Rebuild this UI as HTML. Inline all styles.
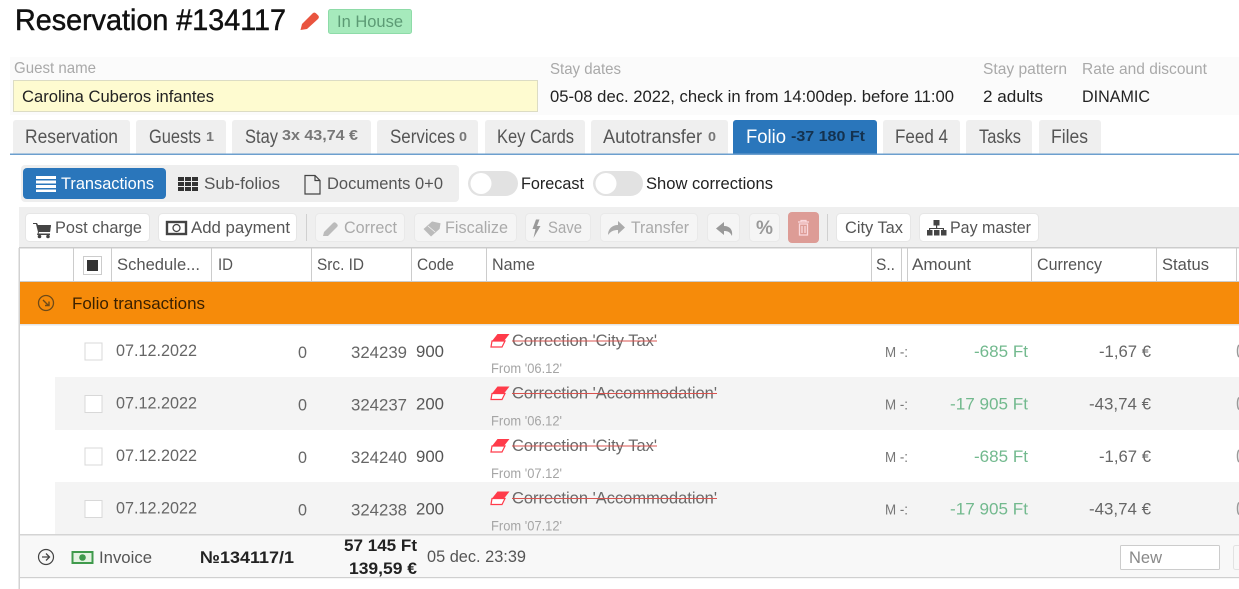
<!DOCTYPE html>
<html lang="en"><head><meta charset="utf-8"><title>Reservation #134117</title>
<style>
html,body{margin:0;padding:0;background:#fff;width:1239px;height:589px;overflow:hidden}
svg{display:block}
text{font-family:"Liberation Sans",sans-serif;font-size:17px;fill:#4a4a4a}
.l{fill:#a9a9a9;font-size:16px}
.d{fill:#222}
.s{font-size:13px;font-weight:bold;fill:#777}
.o{fill:#aaa}
.t{fill:#555}
.g{fill:#72b98e}
.r{fill:#666}
.f{font-size:14px;fill:#a5a5a5}
.b{font-weight:bold;fill:#222}
.st{fill:#6a6a6a}
.m{font-size:15px;fill:#777}
</style></head><body>
<svg width="1239" height="589" viewBox="0 0 1239 589" xmlns="http://www.w3.org/2000/svg">
<!-- title -->
<text x="15" y="30" style="font-size:30px;fill:#111;stroke:#111;stroke-width:.5" textLength="271" lengthAdjust="spacingAndGlyphs">Reservation #134117</text>
<path d="M300.500 30l1.500-6 10.500-10.500c1.200-1.200 2.500-1.200 3.700 0l1.800 1.800c1.200 1.200 1.200 2.500 0 3.700L307 29z" fill="#e9543f"/>
<rect x="328.500" y="9.500" width="83" height="24" rx="2" fill="#a6eabc" stroke="#8edba8"/>
<text x="337" y="27" style="fill:#5c9a74" textLength="66" lengthAdjust="spacingAndGlyphs">In House</text>
<!-- info panel -->
<rect x="10" y="57" width="1229" height="58" fill="#fbfbfb"/>
<text class="l" x="14" y="73" textLength="82" lengthAdjust="spacingAndGlyphs">Guest name</text>
<rect x="13.500" y="80.500" width="524" height="31" fill="#fefbd0" stroke="#dcdcc4"/>
<text class="d" x="22" y="102" textLength="192" lengthAdjust="spacingAndGlyphs">Carolina Cuberos infantes</text>
<text class="l" x="550" y="74" textLength="71" lengthAdjust="spacingAndGlyphs">Stay dates</text>
<text class="d" x="550" y="102" textLength="404" lengthAdjust="spacingAndGlyphs">05-08 dec. 2022, check in from 14:00dep. before 11:00</text>
<text class="l" x="983" y="74" textLength="84" lengthAdjust="spacingAndGlyphs">Stay pattern</text>
<text class="d" x="983" y="102" textLength="60" lengthAdjust="spacingAndGlyphs">2 adults</text>
<text class="l" x="1082" y="74" textLength="125" lengthAdjust="spacingAndGlyphs">Rate and discount</text>
<text class="d" x="1082" y="102" textLength="68" lengthAdjust="spacingAndGlyphs">DINAMIC</text>
<!-- tabs -->
<g fill="#efefef">
<path d="M13 154v-31a3 3 0 0 1 3-3h111a3 3 0 0 1 3 3v31z"/>
<path d="M136 154v-31a3 3 0 0 1 3-3h84a3 3 0 0 1 3 3v31z"/>
<path d="M232 154v-31a3 3 0 0 1 3-3h133a3 3 0 0 1 3 3v31z"/>
<path d="M377 154v-31a3 3 0 0 1 3-3h95a3 3 0 0 1 3 3v31z"/>
<path d="M485 154v-31a3 3 0 0 1 3-3h94a3 3 0 0 1 3 3v31z"/>
<path d="M591 154v-31a3 3 0 0 1 3-3h131a3 3 0 0 1 3 3v31z"/>
<path d="M883 154v-31a3 3 0 0 1 3-3h71a3 3 0 0 1 3 3v31z"/>
<path d="M966 154v-31a3 3 0 0 1 3-3h60a3 3 0 0 1 3 3v31z"/>
<path d="M1039 154v-31a3 3 0 0 1 3-3h56a3 3 0 0 1 3 3v31z"/>
</g>
<path d="M733 154v-31a3 3 0 0 1 3-3h138a3 3 0 0 1 3 3v31z" fill="#2a76bb"/>
<rect x="10" y="153.500" width="1229" height="1.500" fill="#6c9fce"/>
<g>
<text class="t" x="25" y="143" textLength="93" lengthAdjust="spacingAndGlyphs" style="font-size:19px">Reservation</text>
<text class="t" x="149" y="143" textLength="52" lengthAdjust="spacingAndGlyphs" style="font-size:19px">Guests</text>
<text class="s" x="206" y="141" textLength="8" lengthAdjust="spacingAndGlyphs">1</text>
<text class="t" x="245" y="143" textLength="33" lengthAdjust="spacingAndGlyphs" style="font-size:19px">Stay</text>
<text class="s" x="282" y="140" textLength="76" lengthAdjust="spacingAndGlyphs" style="font-size:15px">3x 43,74 €</text>
<text class="t" x="390" y="143" textLength="65" lengthAdjust="spacingAndGlyphs" style="font-size:19px">Services</text>
<text class="s" x="459" y="141" textLength="8" lengthAdjust="spacingAndGlyphs">0</text>
<text class="t" x="497" y="143" textLength="77" lengthAdjust="spacingAndGlyphs" style="font-size:19px">Key Cards</text>
<text class="t" x="603" y="143" textLength="99" lengthAdjust="spacingAndGlyphs" style="font-size:19px">Autotransfer</text>
<text class="s" x="708" y="141" textLength="8" lengthAdjust="spacingAndGlyphs">0</text>
<text x="746" y="143" textLength="40" lengthAdjust="spacingAndGlyphs" style="font-size:19px;fill:#fff">Folio</text>
<text x="791" y="141" textLength="74" lengthAdjust="spacingAndGlyphs" style="font-size:15px;font-weight:bold;fill:#14324f">-37 180 Ft</text>
<text class="t" x="895" y="143" textLength="53" lengthAdjust="spacingAndGlyphs" style="font-size:19px">Feed 4</text>
<text class="t" x="979" y="143" textLength="42" lengthAdjust="spacingAndGlyphs" style="font-size:19px">Tasks</text>
<text class="t" x="1051" y="143" textLength="37" lengthAdjust="spacingAndGlyphs" style="font-size:19px">Files</text>
</g>
<!-- segmented -->
<rect x="21" y="165" width="438" height="37" rx="4" fill="#eee"/>
<rect x="23" y="168" width="143" height="31" rx="4" fill="#2a76bb"/>
<g fill="#fff"><rect x="36" y="176" width="20" height="3"/><rect x="36" y="180.500" width="20" height="3"/><rect x="36" y="185" width="20" height="3"/><rect x="36" y="189.500" width="20" height="2.500"/></g>
<text x="61" y="189" textLength="93" lengthAdjust="spacingAndGlyphs" style="fill:#fff">Transactions</text>
<g fill="#333"><rect x="178" y="177" width="6" height="4"/><rect x="185" y="177" width="6" height="4"/><rect x="192" y="177" width="6" height="4"/><rect x="178" y="182" width="6" height="4"/><rect x="185" y="182" width="6" height="4"/><rect x="192" y="182" width="6" height="4"/><rect x="178" y="187" width="6" height="4"/><rect x="185" y="187" width="6" height="4"/><rect x="192" y="187" width="6" height="4"/></g>
<text class="t" x="204" y="189" textLength="76" lengthAdjust="spacingAndGlyphs">Sub-folios</text>
<path d="M305 175.500h10l5 5v13.500h-15zM315 175.500v5h5" fill="none" stroke="#444" stroke-width="1.200"/>
<text class="t" x="327" y="189" textLength="116" lengthAdjust="spacingAndGlyphs">Documents 0+0</text>
<!-- toggles -->
<rect x="468" y="171" width="50" height="25" rx="12.500" fill="#e2e2e2"/><circle cx="481" cy="183.500" r="10.500" fill="#fff"/>
<text class="d" x="521" y="189" textLength="63" lengthAdjust="spacingAndGlyphs">Forecast</text>
<rect x="593" y="171" width="50" height="25" rx="12.500" fill="#e2e2e2"/><circle cx="606" cy="183.500" r="10.500" fill="#fff"/>
<text class="d" x="646" y="189" textLength="127" lengthAdjust="spacingAndGlyphs">Show corrections</text>
<!-- toolbar -->
<rect x="19" y="207" width="1220" height="41" fill="#efefef"/>
<g fill="#fff" stroke="#e6e6e6">
<rect x="25.500" y="213.500" width="124" height="28" rx="4"/>
<rect x="158.500" y="213.500" width="138" height="28" rx="4"/>
<rect x="836.500" y="213.500" width="74" height="28" rx="4"/>
<rect x="919.500" y="213.500" width="119" height="28" rx="4"/>
</g>
<g fill="#f5f5f5" stroke="#e9e9e9">
<rect x="315.500" y="213.500" width="89" height="28" rx="4"/>
<rect x="414.500" y="213.500" width="102" height="28" rx="4"/>
<rect x="525.500" y="213.500" width="65" height="28" rx="4"/>
<rect x="600.500" y="213.500" width="97" height="28" rx="4"/>
<rect x="707.500" y="213.500" width="32" height="28" rx="4"/>
<rect x="749.500" y="213.500" width="30" height="28" rx="4"/>
</g>
<rect x="788" y="212" width="31" height="31" rx="4" fill="#dd9c96"/>
<rect x="306" y="214" width="1" height="27" fill="#d0d0d0"/>
<rect x="827" y="214" width="1" height="27" fill="#d0d0d0"/>
<!-- cart -->
<path d="M33 223h4l1 2h13l-1 7H39l-.5 1.500H50v1.500H37l1-3-2-8h-3z" fill="#444"/><path d="M37.500 225h13.500l-1 7H39z" fill="#444"/><circle cx="39.500" cy="236.500" r="1.800" fill="#444"/><circle cx="48" cy="236.500" r="1.800" fill="#444"/>
<text class="t" x="55" y="233" textLength="87" lengthAdjust="spacingAndGlyphs">Post charge</text>
<!-- money -->
<rect x="167" y="222" width="19" height="12" fill="none" stroke="#444" stroke-width="2.400"/><circle cx="176.500" cy="228" r="3.500" fill="none" stroke="#444" stroke-width="1.300"/>
<text class="t" x="191" y="233" textLength="99" lengthAdjust="spacingAndGlyphs">Add payment</text>
<!-- correct -->
<path d="M323 236l1-4 9-9c1-1 2-1 3 0l1 1c1 1 1 2 0 3l-9 9z" fill="#bbb"/>
<text class="o" x="344" y="233" textLength="53" lengthAdjust="spacingAndGlyphs">Correct</text>
<!-- fiscalize -->
<path d="M423 229l9-8 9 2-1 6-9 8zM428 226l7 6" fill="#bbb" stroke="#f5f5f5" stroke-width=".8"/>
<text class="o" x="445" y="233" textLength="63" lengthAdjust="spacingAndGlyphs">Fiscalize</text>
<!-- bolt -->
<path d="M536 219.500l-3.500 9.500h3l-2 9 7-12h-3.500l2.500-6.500z" fill="#999"/>
<text class="o" x="548" y="233" textLength="34" lengthAdjust="spacingAndGlyphs">Save</text>
<!-- share -->
<path d="M608 235c0-6 4-10 10-10v-4l7 6.500-7 6.500v-4c-4 0-7 1-10 5z" fill="#aaa"/>
<text class="o" x="631" y="233" textLength="58" lengthAdjust="spacingAndGlyphs">Transfer</text>
<!-- undo -->
<path d="M732 236c1-6-2-10-8-10v-4l-8 6.500 8 6.500v-4c4 0 6 1 8 5z" fill="#999"/>
<text x="756" y="234" textLength="17" lengthAdjust="spacingAndGlyphs" style="fill:#999;font-size:19px;font-weight:bold">%</text>
<!-- trash -->
<path d="M798 222h11M801 222v-1.500h5v1.500M799.500 224h8v11h-8zM802 226v7M805 226v7" fill="none" stroke="#fbd9de" stroke-width="1.300"/>
<text class="t" x="845" y="233" textLength="58" lengthAdjust="spacingAndGlyphs">City Tax</text>
<!-- sitemap -->
<rect x="933.500" y="220" width="6" height="5.500" fill="#444"/><path d="M936 225h1.200v3H944v3h-1.200v-2H930.200v2H929v-3h7z" fill="#444"/><rect x="927" y="230" width="5.500" height="5.500" fill="#444"/><rect x="934" y="230" width="5.500" height="5.500" fill="#444"/><rect x="941" y="230" width="5.500" height="5.500" fill="#444"/>
<text class="t" x="950" y="233" textLength="81" lengthAdjust="spacingAndGlyphs">Pay master</text>
<!-- table header -->
<rect x="19" y="247" width="1220" height="1.500" fill="#ccc"/>
<rect x="19" y="281" width="1220" height="1" fill="#ccc"/>
<rect x="18.500" y="248" width="1.500" height="341" fill="#d2d2d2"/>
<g fill="#ccc">
<rect x="73" y="248" width="1" height="33"/><rect x="111" y="248" width="1" height="33"/><rect x="211" y="248" width="1" height="33"/><rect x="311" y="248" width="1" height="33"/><rect x="411" y="248" width="1" height="33"/><rect x="486" y="248" width="1" height="33"/><rect x="871" y="248" width="1" height="33"/><rect x="901" y="248" width="1" height="33"/><rect x="907" y="248" width="1" height="33"/><rect x="1031" y="248" width="1" height="33"/><rect x="1156" y="248" width="1" height="33"/><rect x="1236" y="248" width="1" height="33"/>
</g>
<rect x="83.500" y="256.500" width="18" height="18" fill="#fff" stroke="#ccc"/><rect x="87" y="260" width="11" height="11" fill="#333"/>
<text class="t" x="117" y="270" textLength="83" lengthAdjust="spacingAndGlyphs">Schedule...</text>
<text class="t" x="218" y="270" textLength="15" lengthAdjust="spacingAndGlyphs">ID</text>
<text class="t" x="317" y="270" textLength="47" lengthAdjust="spacingAndGlyphs">Src. ID</text>
<text class="t" x="417" y="270" textLength="37" lengthAdjust="spacingAndGlyphs">Code</text>
<text class="t" x="492" y="270" textLength="43" lengthAdjust="spacingAndGlyphs">Name</text>
<text class="t" x="876" y="270" textLength="19" lengthAdjust="spacingAndGlyphs">S..</text>
<text class="t" x="912" y="270" textLength="59" lengthAdjust="spacingAndGlyphs">Amount</text>
<text class="t" x="1037" y="270" textLength="65" lengthAdjust="spacingAndGlyphs">Currency</text>
<text class="t" x="1162" y="270" textLength="47" lengthAdjust="spacingAndGlyphs">Status</text>
<!-- orange -->
<rect x="20" y="282" width="1219" height="42" fill="#f68b0a"/>
<circle cx="46" cy="303" r="7.500" fill="none" stroke="#6e4a18" stroke-width="1.300"/>
<path d="M43 300l5.500 5.500M49 301.500v4h-4" fill="none" stroke="#6e4a18" stroke-width="1.400"/>
<text x="72" y="309" textLength="133" lengthAdjust="spacingAndGlyphs" style="fill:#3a2000">Folio transactions</text>
<rect x="20" y="324" width="1219" height="1.500" fill="#e4e4e4"/>
<!-- rows -->
<rect x="55" y="377" width="1184" height="53" fill="#f4f4f4"/>
<rect x="55" y="482" width="1184" height="52" fill="#f4f4f4"/>
<!-- row 1 -->
<g>
<rect x="85" y="343" width="17" height="17" fill="#fff" stroke="#d8d8d8"/>
<text class="r" x="116" y="356" textLength="81" lengthAdjust="spacingAndGlyphs">07.12.2022</text>
<text class="r" x="298" y="358" textLength="9" lengthAdjust="spacingAndGlyphs">0</text>
<text class="r" x="351" y="358" textLength="56" lengthAdjust="spacingAndGlyphs">324239</text>
<text class="t" x="416" y="357" textLength="28" lengthAdjust="spacingAndGlyphs">900</text>
<path d="M497.500 334h12l-5.500 7h-12z" fill="#ff3b4a"/><path d="M492 341l-1 6h11l3-6z" fill="#fff" stroke="#ff3b4a" stroke-width="1.200"/>
<text class="st" x="512" y="346" textLength="145" lengthAdjust="spacingAndGlyphs">Correction 'City Tax'</text>
<rect x="512" y="340.500" width="145" height="1" fill="#d9534f"/>
<text class="f" x="491" y="373" textLength="71" lengthAdjust="spacingAndGlyphs">From '06.12'</text>
<text class="m" x="885" y="357" textLength="23" lengthAdjust="spacingAndGlyphs">M -:</text>
<text class="g" x="974" y="357" textLength="54" lengthAdjust="spacingAndGlyphs">-685 Ft</text>
<text class="r" x="1099" y="357" textLength="52" lengthAdjust="spacingAndGlyphs">-1,67 €</text>
<path d="M1239 345c-2 2-2 10 0 12" fill="none" stroke="#999" stroke-width="1.500"/>
</g>
<!-- row 2 -->
<g transform="translate(0 52.500)">
<rect x="85" y="343" width="17" height="17" fill="#fff" stroke="#d8d8d8"/>
<text class="r" x="116" y="356" textLength="81" lengthAdjust="spacingAndGlyphs">07.12.2022</text>
<text class="r" x="298" y="358" textLength="9" lengthAdjust="spacingAndGlyphs">0</text>
<text class="r" x="351" y="358" textLength="56" lengthAdjust="spacingAndGlyphs">324237</text>
<text class="t" x="416" y="357" textLength="28" lengthAdjust="spacingAndGlyphs">200</text>
<path d="M497.500 334h12l-5.500 7h-12z" fill="#ff3b4a"/><path d="M492 341l-1 6h11l3-6z" fill="#fff" stroke="#ff3b4a" stroke-width="1.200"/>
<text class="st" x="512" y="346" textLength="205" lengthAdjust="spacingAndGlyphs">Correction 'Accommodation'</text>
<rect x="512" y="340.500" width="205" height="1" fill="#d9534f"/>
<text class="f" x="491" y="373" textLength="71" lengthAdjust="spacingAndGlyphs">From '06.12'</text>
<text class="m" x="885" y="357" textLength="23" lengthAdjust="spacingAndGlyphs">M -:</text>
<text class="g" x="950" y="357" textLength="78" lengthAdjust="spacingAndGlyphs">-17 905 Ft</text>
<text class="r" x="1089" y="357" textLength="62" lengthAdjust="spacingAndGlyphs">-43,74 €</text>
<path d="M1239 345c-2 2-2 10 0 12" fill="none" stroke="#999" stroke-width="1.500"/>
</g>
<!-- row 3 -->
<g transform="translate(0 105)">
<rect x="85" y="343" width="17" height="17" fill="#fff" stroke="#d8d8d8"/>
<text class="r" x="116" y="356" textLength="81" lengthAdjust="spacingAndGlyphs">07.12.2022</text>
<text class="r" x="298" y="358" textLength="9" lengthAdjust="spacingAndGlyphs">0</text>
<text class="r" x="351" y="358" textLength="56" lengthAdjust="spacingAndGlyphs">324240</text>
<text class="t" x="416" y="357" textLength="28" lengthAdjust="spacingAndGlyphs">900</text>
<path d="M497.500 334h12l-5.500 7h-12z" fill="#ff3b4a"/><path d="M492 341l-1 6h11l3-6z" fill="#fff" stroke="#ff3b4a" stroke-width="1.200"/>
<text class="st" x="512" y="346" textLength="145" lengthAdjust="spacingAndGlyphs">Correction 'City Tax'</text>
<rect x="512" y="340.500" width="145" height="1" fill="#d9534f"/>
<text class="f" x="491" y="373" textLength="71" lengthAdjust="spacingAndGlyphs">From '07.12'</text>
<text class="m" x="885" y="357" textLength="23" lengthAdjust="spacingAndGlyphs">M -:</text>
<text class="g" x="974" y="357" textLength="54" lengthAdjust="spacingAndGlyphs">-685 Ft</text>
<text class="r" x="1099" y="357" textLength="52" lengthAdjust="spacingAndGlyphs">-1,67 €</text>
<path d="M1239 345c-2 2-2 10 0 12" fill="none" stroke="#999" stroke-width="1.500"/>
</g>
<!-- row 4 -->
<g transform="translate(0 157.500)">
<rect x="85" y="343" width="17" height="17" fill="#fff" stroke="#d8d8d8"/>
<text class="r" x="116" y="356" textLength="81" lengthAdjust="spacingAndGlyphs">07.12.2022</text>
<text class="r" x="298" y="358" textLength="9" lengthAdjust="spacingAndGlyphs">0</text>
<text class="r" x="351" y="358" textLength="56" lengthAdjust="spacingAndGlyphs">324238</text>
<text class="t" x="416" y="357" textLength="28" lengthAdjust="spacingAndGlyphs">200</text>
<path d="M497.500 334h12l-5.500 7h-12z" fill="#ff3b4a"/><path d="M492 341l-1 6h11l3-6z" fill="#fff" stroke="#ff3b4a" stroke-width="1.200"/>
<text class="st" x="512" y="346" textLength="205" lengthAdjust="spacingAndGlyphs">Correction 'Accommodation'</text>
<rect x="512" y="340.500" width="205" height="1" fill="#d9534f"/>
<text class="f" x="491" y="373" textLength="71" lengthAdjust="spacingAndGlyphs">From '07.12'</text>
<text class="m" x="885" y="357" textLength="23" lengthAdjust="spacingAndGlyphs">M -:</text>
<text class="g" x="950" y="357" textLength="78" lengthAdjust="spacingAndGlyphs">-17 905 Ft</text>
<text class="r" x="1089" y="357" textLength="62" lengthAdjust="spacingAndGlyphs">-43,74 €</text>
<path d="M1239 345c-2 2-2 10 0 12" fill="none" stroke="#999" stroke-width="1.500"/>
</g>
<!-- footer -->
<rect x="20" y="534" width="1219" height="1.500" fill="#d4d4d4"/>
<rect x="20" y="535.500" width="1219" height="41.500" fill="#f8f8f8"/>
<rect x="20" y="577" width="1219" height="1.200" fill="#d0d0d0"/>
<circle cx="46" cy="557" r="7.500" fill="none" stroke="#444" stroke-width="1.200"/>
<path d="M42 557h7M46 553.500l3.500 3.500-3.500 3.500" fill="none" stroke="#444" stroke-width="1.300"/>
<rect x="72.500" y="552" width="20" height="11" fill="#e4f2e2" stroke="#3f9a4c" stroke-width="2"/><circle cx="82.500" cy="557.500" r="3.300" fill="#3f9a4c"/>
<text class="t" x="99" y="563" textLength="53" lengthAdjust="spacingAndGlyphs">Invoice</text>
<text class="b" x="200" y="563" textLength="94" lengthAdjust="spacingAndGlyphs">№134117/1</text>
<text class="b" x="344" y="551" textLength="73" lengthAdjust="spacingAndGlyphs">57 145 Ft</text>
<text class="b" x="349" y="574" textLength="68" lengthAdjust="spacingAndGlyphs">139,59 €</text>
<text class="t" x="427" y="562" textLength="99" lengthAdjust="spacingAndGlyphs">05 dec. 23:39</text>
<rect x="1120.500" y="545.500" width="99" height="24" rx="1" fill="#fff" stroke="#ccc"/>
<text x="1129" y="563" textLength="33" lengthAdjust="spacingAndGlyphs" style="fill:#888">New</text>
<rect x="1233.500" y="545.500" width="8" height="24" rx="2" fill="#f8f8f8" stroke="#e2e2e2"/>
</svg>
</body></html>
